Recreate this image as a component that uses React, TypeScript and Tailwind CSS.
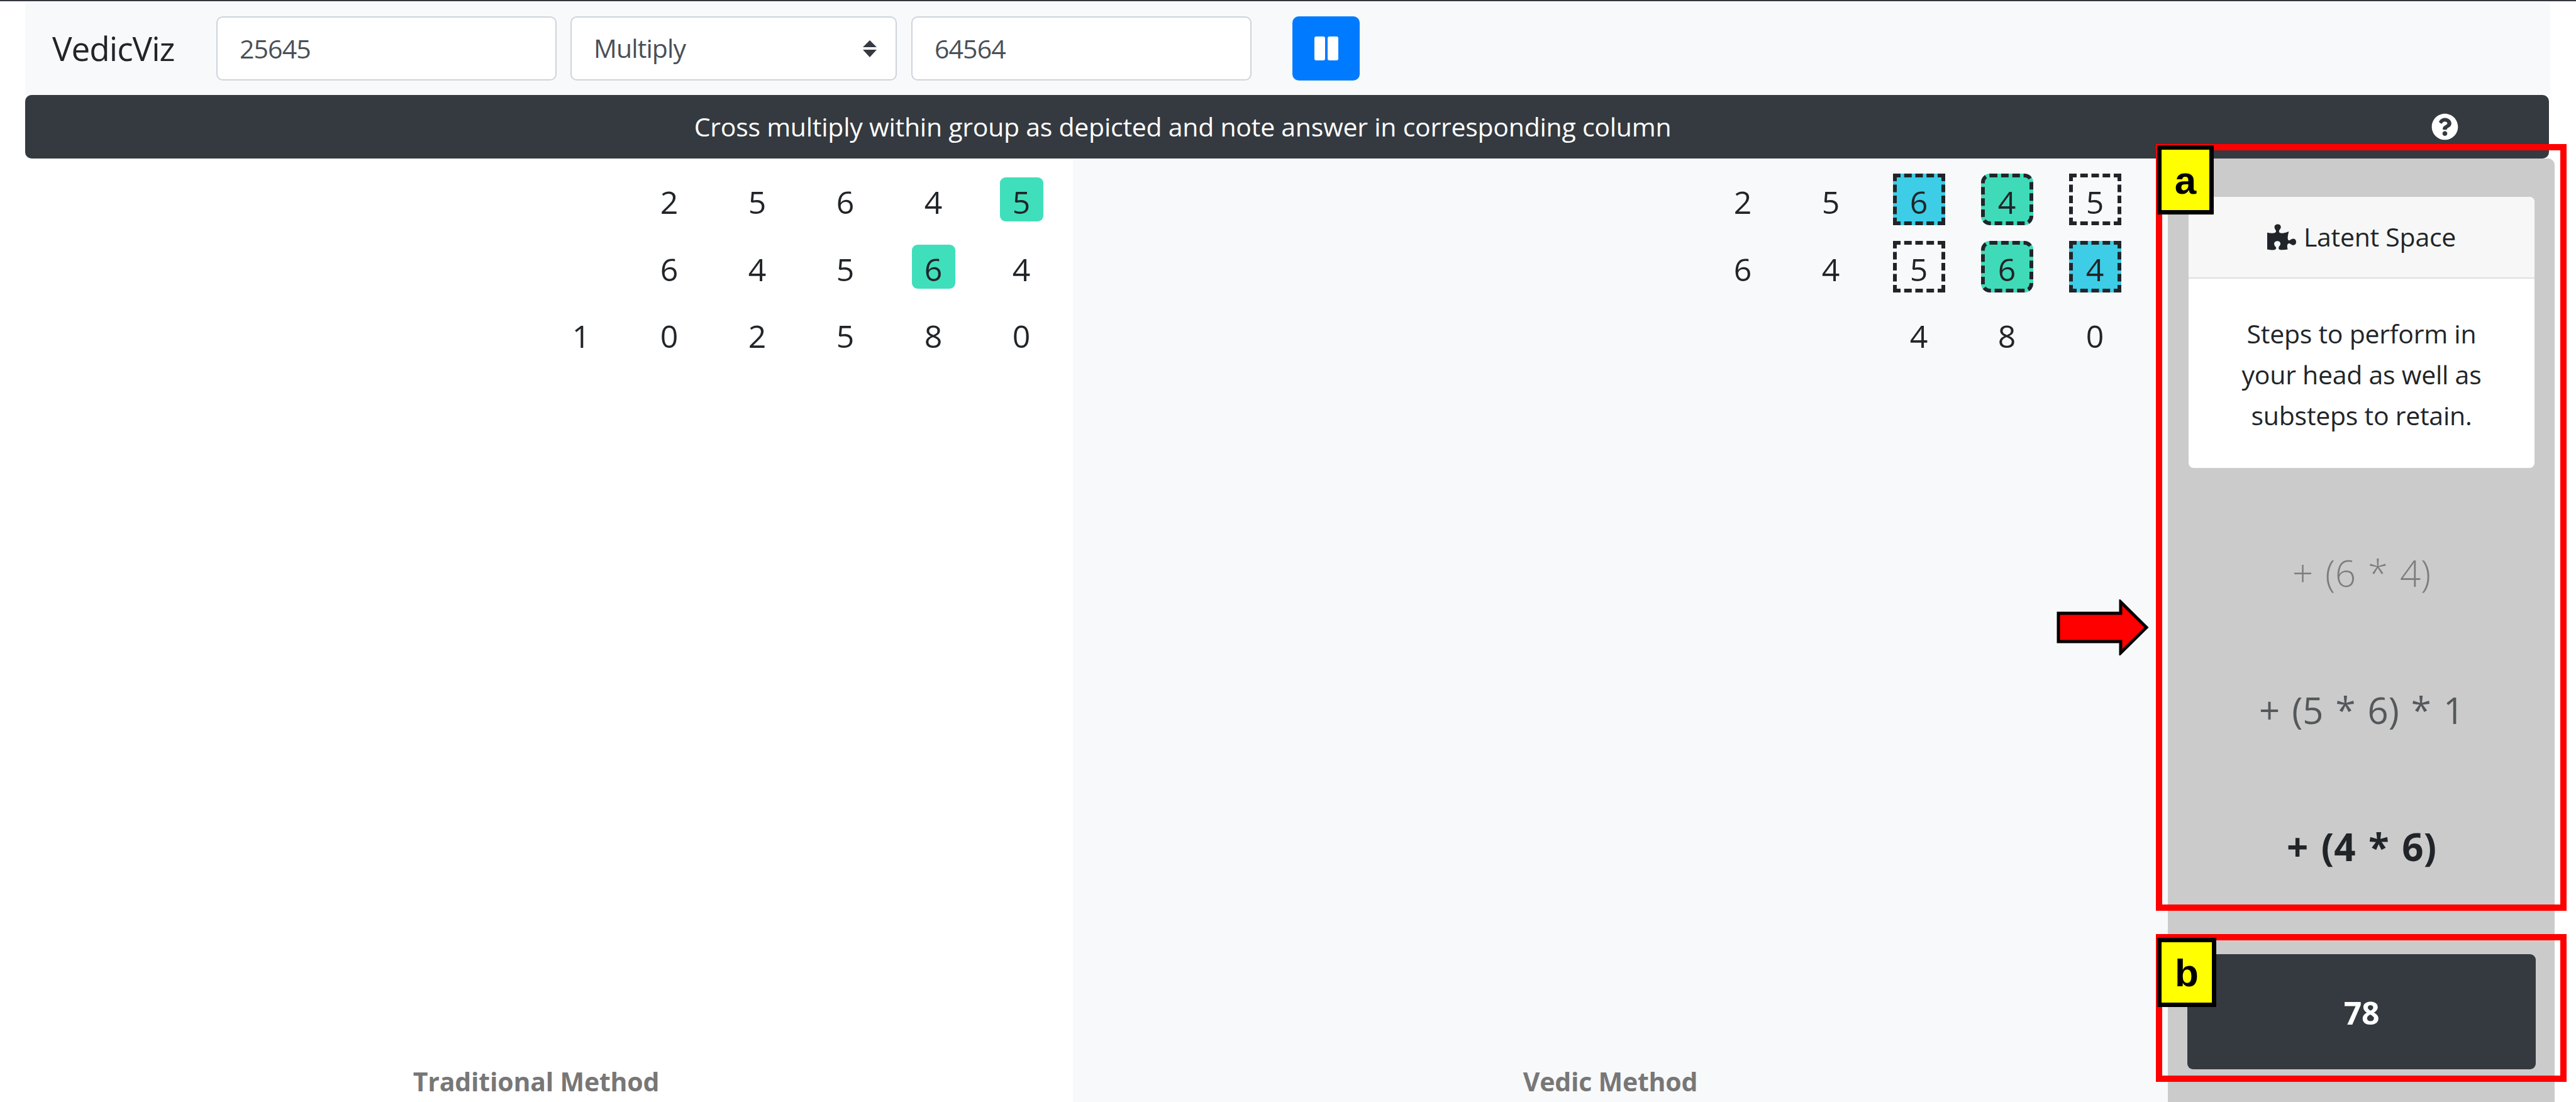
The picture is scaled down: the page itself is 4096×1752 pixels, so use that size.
import { FaPuzzlePiece, FaQuestionCircle } from "react-icons/fa";

const traditional = [
  ["", "2", "5", "6", "4", "5"],
  ["", "6", "4", "5", "6", "4"],
  ["1", "0", "2", "5", "8", "0"],
];

const vedic = [
  ["2", "5", "6", "4", "5"],
  ["6", "4", "5", "6", "4"],
  ["", "", "4", "8", "0"],
];

function Digit({ value, box }: { value: string; box?: string }) {
  return (
    <div className="w-[140px] h-[106.5px] flex items-center justify-center text-[50px]">
      <span className={`flex items-center justify-center leading-[64px] ${box ?? ""}`}>{value}</span>
    </div>
  );
}

const plain = "w-[69px] h-[70px] pt-[8px] -mt-[8px] rounded-[9px] bg-[#40dfbb]";
const dashed = "w-[83px] h-[82px] pt-[8px] -mt-[8px] border-[6px] border-dashed border-[#212529]";
const cyan = `${dashed} bg-[#3dcde6]`;
const teal = `${dashed} bg-[#3fdbb9] rounded-[14px]`;

function boxForTraditional(r: number, c: number) {
  if (r === 0 && c === 5) return plain;
  if (r === 1 && c === 4) return plain;
  return undefined;
}

function boxForVedic(r: number, c: number) {
  if (r === 0 && c === 2) return cyan;
  if (r === 0 && c === 3) return teal;
  if (r === 0 && c === 4) return dashed;
  if (r === 1 && c === 2) return dashed;
  if (r === 1 && c === 3) return teal;
  if (r === 1 && c === 4) return cyan;
  return undefined;
}

function TextInput({ value }: { value: string }) {
  return (
    <input
      readOnly
      value={value}
      className="w-[541px] h-[102px] px-[35px] bg-white border-[2px] border-[#ced4da] rounded-[10px] text-[#495057] outline-none tracking-[-0.9px]"
    />
  );
}

export default function App() {
  return (
    <div className="relative w-[4096px] h-[1752px] overflow-hidden bg-white flex flex-col border-t-[2px] border-[#33373d] font-['Open_Sans',sans-serif] text-[41px] text-[#212529] tracking-[-0.25px]">
      <div className="mt-[2px] ml-[40px] w-[4015px] h-[147px] bg-[#f8f9fa] flex items-start pt-[22px] pl-[43px]">
        <div className="w-[261px] h-[102px] flex items-center text-[53px] tracking-[-1px]">VedicViz</div>
        <TextInput value="25645" />
        <div className="relative ml-[22px]">
          <select
            defaultValue="Multiply"
            className="w-[519px] h-[102px] px-[35px] bg-white border-[2px] border-[#ced4da] rounded-[10px] text-[#495057] appearance-none outline-none tracking-[-0.9px]"
          >
            <option>Multiply</option>
          </select>
          <svg viewBox="0 0 22 27" className="absolute left-[465px] top-[38px] w-[22px] h-[27px]">
            <polygon points="11,0 22,11 0,11" fill="#343a40" />
            <polygon points="11,27 22,15 0,15" fill="#343a40" />
          </svg>
        </div>
        <div className="ml-[23px]">
          <TextInput value="64564" />
        </div>
        <button className="ml-[65px] w-[107px] h-[102px] bg-[#007bff] rounded-[10px] flex items-center justify-center">
          <svg viewBox="0 0 38 38" className="w-[38px] h-[38px]">
            <rect x="0" y="0" width="17" height="38" rx="3" fill="white" />
            <rect x="21" y="0" width="17" height="38" rx="3" fill="white" />
          </svg>
        </button>
      </div>

      <div className="ml-[40px] w-[4013px] h-[101px] bg-[#343a40] rounded-[10px] flex items-center text-white">
        <div className="w-[3681px] text-center">
          Cross multiply within group as depicted and note answer in corresponding column
        </div>
        <div className="flex-1 flex justify-center">
          <FaQuestionCircle className="w-[43px] h-[43px]" />
        </div>
      </div>

      <div className="flex flex-1 min-h-0">
        <div className="w-[1706px] flex flex-col justify-between pt-[16px] pr-[12px] pb-[1px]">
          <div className="flex flex-col items-end">
            {traditional.map((row, r) => (
              <div key={r} className="flex">
                {row.map((d, c) => (
                  <Digit key={c} value={d} box={boxForTraditional(r, c)} />
                ))}
              </div>
            ))}
          </div>
          <div className="text-center font-bold text-[#777777] leading-[64px] pl-[11px] tracking-[-0.2px]">Traditional Method</div>
        </div>

        <div className="w-[1741px] bg-[#f8f9fa] flex flex-col justify-between pt-[16px] pr-[46px] pb-[1px]">
          <div className="flex flex-col items-end">
            {vedic.map((row, r) => (
              <div key={r} className="flex">
                {row.map((d, c) => (
                  <Digit key={c} value={d} box={boxForVedic(r, c)} />
                ))}
              </div>
            ))}
          </div>
          <div className="text-center font-bold text-[#777777] leading-[64px] pl-[14px] tracking-[-0.2px]">Vedic Method</div>
        </div>

        <div className="w-[615px] bg-[#cbcbcb] rounded-tr-[10px] pt-[61px] pl-[33px] pr-[32px] flex flex-col">
          <div className="h-[431px] bg-white rounded-[8px] flex flex-col">
            <div className="h-[130px] bg-[#f7f7f7] border-b-[2px] border-[#dfdfdf] rounded-t-[8px] flex items-center justify-center gap-[12px]">
              <FaPuzzlePiece className="w-[46px] h-[46px] text-[#212529]" />
              <span>Latent Space</span>
            </div>
            <div className="flex-1 text-center leading-[65px] pt-[55px]">
              <div>Steps to perform in</div>
              <div>your head as well as</div>
              <div>substeps to retain.</div>
            </div>
          </div>

          <div className="mt-[57px] flex flex-col text-[58px] tracking-normal [word-spacing:4px]">
            <div className="h-[218px] flex items-center justify-center font-light text-[#7d7d7d]">+ (6 * 4)</div>
            <div className="h-[218px] flex items-center justify-center font-normal text-[#55585b]">+ (5 * 6) * 1</div>
            <div className="h-[218px] flex items-center justify-center font-bold text-[60px] text-[#212529] [word-spacing:5px]">+ (4 * 6)</div>
          </div>

          <div className="mt-[62px] -mx-[2px] h-[183px] pt-[4px] bg-[#343a40] rounded-[9px] flex items-center justify-center text-white font-bold text-[50px]">
            78
          </div>
        </div>
      </div>

      {/* callouts drawn over the screenshot */}
      <div className="absolute left-[3428px] top-[227px] w-[653px] h-[1219px] border-[10px] border-[#ff0000]" />
      <div className="absolute left-[3428px] top-[1483px] w-[653px] h-[235px] border-[10px] border-[#ff0000]" />
      <div className="absolute left-[3430px] top-[229px] w-[90px] h-[110px] bg-[#ffff00] border-[7px] border-black flex items-center justify-center font-['Liberation_Sans',sans-serif] font-bold text-[62px] text-black tracking-normal">
        a
      </div>
      <div className="absolute left-[3430px] top-[1489px] w-[94px] h-[110px] bg-[#ffff00] border-[7px] border-black flex items-center justify-center font-['Liberation_Sans',sans-serif] font-bold text-[62px] text-black tracking-normal">
        b
      </div>
      <svg viewBox="0 0 147 89" className="absolute left-[3270px] top-[951px] w-[147px] h-[89px]">
        <polygon points="3,22 102,22 102,4 143,44.5 102,85 102,67 3,67" fill="#ff0000" stroke="#000000" strokeWidth="5" />
      </svg>
    </div>
  );
}
